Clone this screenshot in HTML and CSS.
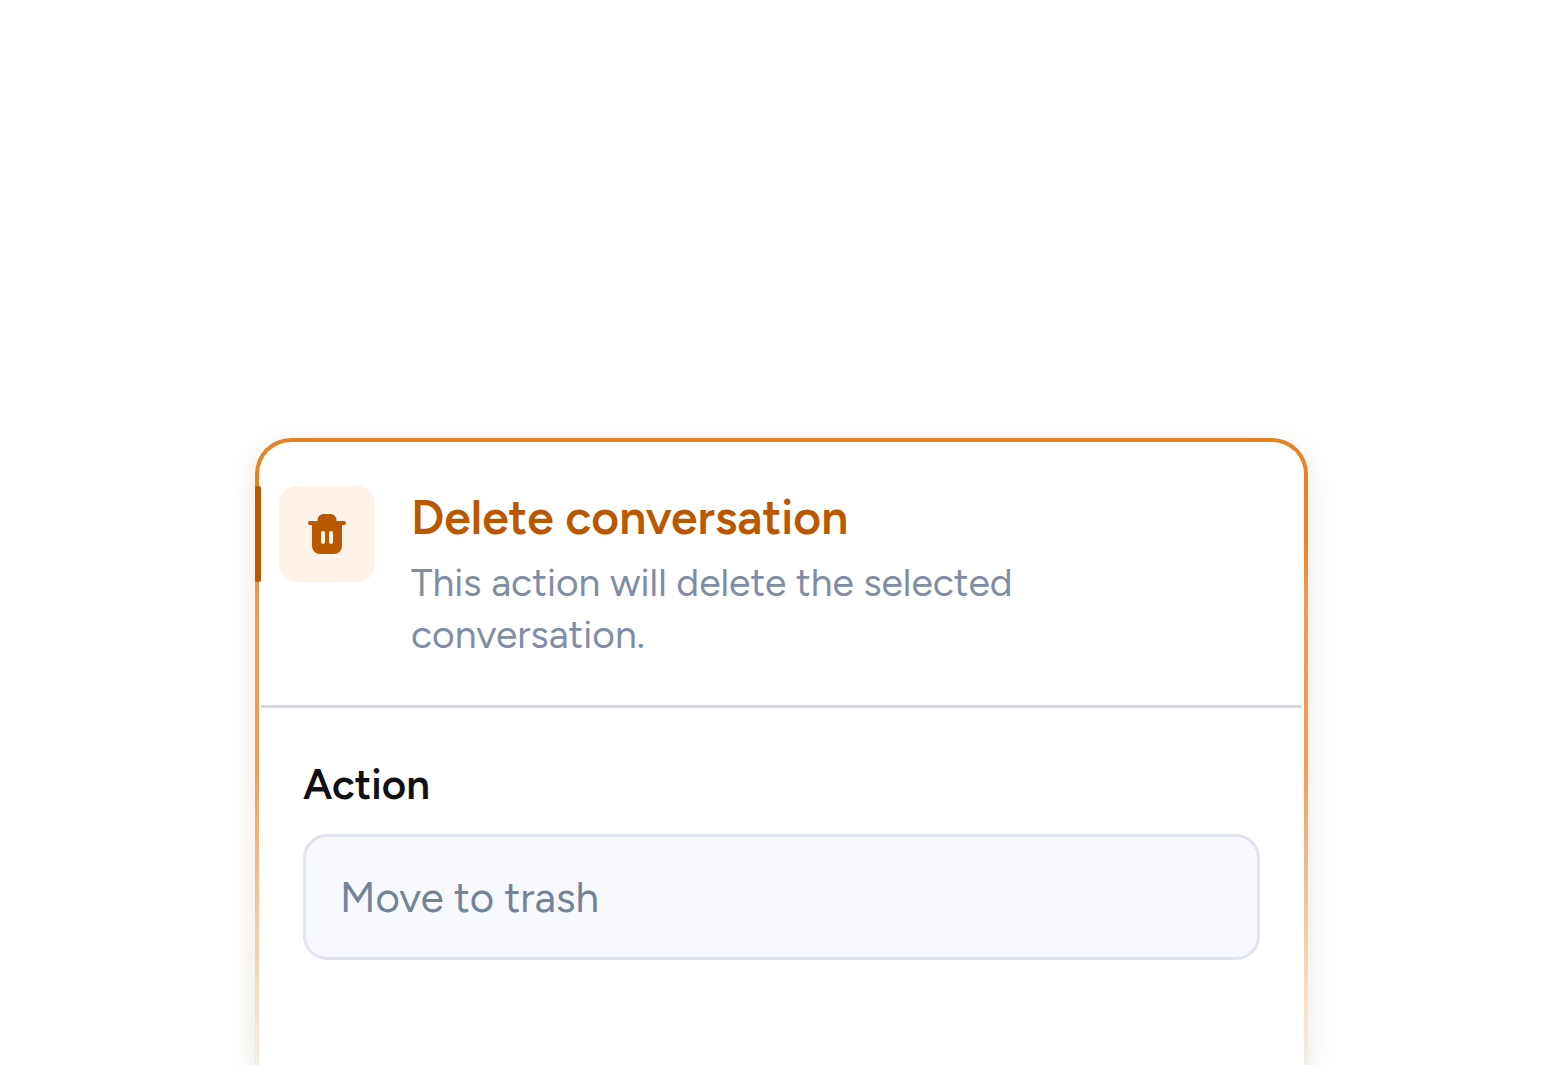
FILE: index.html
```html
<!DOCTYPE html>
<html lang="en">
<head>
<meta charset="utf-8">
<meta name="viewport" content="width=device-width, initial-scale=1">
<title>Delete conversation</title>
<link rel="stylesheet" href="styles.css">
</head>
<body>
<main class="card">
  <header class="card-header">
    <span class="icon-tile">
      <svg class="icon" viewBox="0 0 40 40" aria-hidden="true">
        <path fill="currentColor" fill-rule="evenodd" d="M10.500 7V6a6 6 0 0 1 6-6h7a6 6 0 0 1 6 6v1h7.500a1.700 1.700 0 0 1 0 4H35v21a8 8 0 0 1-8 8H13a8 8 0 0 1-8-8V11H3a1.700 1.700 0 0 1 0-4zM16 17a2 2 0 0 0-2 2v9a2 2 0 0 0 4 0v-9a2 2 0 0 0-2-2zM24 17a2 2 0 0 0-2 2v9a2 2 0 0 0 4 0v-9a2 2 0 0 0-2-2z"/>
      </svg>
    </span>
    <div class="heading">
      <h1 class="title">Delete conversation</h1>
      <p class="description">This action will delete the selected conversation.</p>
    </div>
  </header>
  <form class="card-body">
    <label class="label" for="action">Action</label>
    <input class="field" id="action" type="text" value="Move to trash">
  </form>
</main>
</body>
</html>
```
FILE: styles.css
```css
* {
  box-sizing: border-box;
}

body {
  display: flex;
  flex-direction: column;
  min-height: 100vh;
  margin: 0;
  padding: 438px 24px 0;
  background: #fff;
  font-family: Figtree, Lato, sans-serif;
}

.card {
  flex: 1;
  width: 100%;
  max-width: 1053px;
  margin: 0 auto;
  border: 4px solid transparent;
  border-bottom: 0;
  border-radius: 36px 36px 0 0;
  background:
    linear-gradient(#fff, #fff) padding-box,
    linear-gradient(#e78121 0%, #e78121 15%, #ed9a4f 25%, #ee9d54 52%, #f2bb8a 68%, #f5cda8 80%, #f8dfca 90%, #f3eeea 100%) border-box;
  box-shadow: 0 8px 28px rgba(100, 70, 30, 0.13);
}

.card-header {
  position: relative;
  display: flex;
  gap: 36px;
  margin: 0 2px;
  padding: 44px 18px;
  border-bottom: 3px solid #d6dae6;
}

.card-header::before {
  content: "";
  position: absolute;
  top: 44px;
  left: -6px;
  width: 6px;
  height: 96px;
  border-radius: 2px;
  background: #ba5800;
}

.icon-tile {
  display: grid;
  flex: none;
  place-items: center;
  width: 96px;
  height: 96px;
  border-radius: 18px;
  background: #fdf3e8;
  color: #ba5800;
}

.icon {
  width: 40px;
  height: 40px;
}

.heading {
  max-width: 680px;
}

.title {
  margin: 0;
  color: #ba5800;
  font-size: 48px;
  font-weight: 600;
  line-height: 63px;
}

.description {
  margin: 8px 0 0;
  color: #828da3;
  font-size: 39px;
  line-height: 52px;
}

.card-body {
  display: flex;
  flex-direction: column;
  gap: 20px;
  padding: 48px 44px;
}

.label {
  color: #101114;
  font-size: 42px;
  font-weight: 600;
  line-height: 58px;
}

.field {
  width: 100%;
  height: 126px;
  padding: 0 34px;
  border: 3px solid #e2e5ef;
  border-radius: 24px;
  background: #f8f9fe;
  color: #74829a;
  font: inherit;
  font-size: 42px;
}
```
